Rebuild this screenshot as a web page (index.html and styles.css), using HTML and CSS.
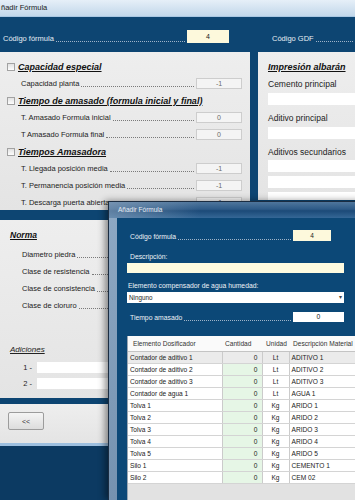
FILE: index.html
```html
<!DOCTYPE html>
<html lang="es">
<head>
<meta charset="utf-8">
<title>Añadir Fórmula</title>
<link rel="stylesheet" href="styles.css">
</head>
<body>

<div class="screen">

  <div class="back-win">
    <div class="win-title">ñadir Fórmula</div>
    <div class="win-body">

      <div class="band">
        <div class="pair first">
          <span class="lbl">Código fórmula</span><span class="dots"></span><span class="ycode">4</span>
        </div>
        <div class="pair second">
          <span class="lbl">Código GDF</span><span class="dots"></span>
        </div>
      </div>

      <div class="cols">
        <div class="panel tiempos">
          <div class="group"><span class="check"></span><span class="heading">Capacidad especial</span></div>
          <div class="row"><span class="lbl">Capacidad planta</span><span class="dots"></span><span class="field">-1</span></div>
          <div class="group"><span class="check"></span><span class="heading">Tiempo de amasado (formula inicial y final)</span></div>
          <div class="row"><span class="lbl">T. Amasado Formula inicial</span><span class="dots"></span><span class="field">0</span></div>
          <div class="row"><span class="lbl">T Amasado Formula final</span><span class="dots"></span><span class="field">0</span></div>
          <div class="group"><span class="check"></span><span class="heading">Tiempos Amasadora</span></div>
          <div class="row"><span class="lbl">T. Llegada posición media</span><span class="dots"></span><span class="field">-1</span></div>
          <div class="row"><span class="lbl">T. Permanencia posición media</span><span class="dots"></span><span class="field">-1</span></div>
          <div class="row"><span class="lbl">T. Descarga puerta abierta</span><span class="dots"></span><span class="field">-1</span></div>
        </div>

        <div class="panel albaran">
          <div class="heading">Impresión albarán</div>
          <div class="cap">Cemento principal</div>
          <div class="blank"></div>
          <div class="cap gap">Aditivo principal</div>
          <div class="blank"></div>
          <div class="cap gap">Aditivos secundarios</div>
          <div class="blank flush"></div>
          <div class="blank"></div>
          <div class="blank"></div>
        </div>
      </div>

      <div class="panel norma">
        <div class="heading small">Norma</div>
        <div class="nrows">
          <div class="nrow"><span class="lbl">Diametro piedra</span><span class="dots"></span></div>
          <div class="nrow"><span class="lbl">Clase de resistencia</span><span class="dots"></span></div>
          <div class="nrow"><span class="lbl">Clase de consistencia</span><span class="dots"></span></div>
          <div class="nrow"><span class="lbl">Clase de cloruro</span><span class="dots"></span></div>
        </div>
        <div class="adic">Adiciones</div>
        <div class="arow"><span class="num">1 -</span><span class="abox"></span></div>
        <div class="arow"><span class="num">2 -</span><span class="abox"></span></div>
      </div>

      <div class="panel foot">
        <button class="btn">&lt;&lt;</button>
      </div>

    </div>
  </div>

  <div class="front-win">
    <div class="front-title">Añadir Fórmula</div>
    <div class="front-body">

      <div class="frow fcode">
        <span class="lbl">Código fórmula</span><span class="dots"></span><span class="ycode small">4</span>
      </div>

      <div class="flabel">Descripción:</div>
      <div class="ybox"></div>

      <div class="flabel tight">Elemento compensador de agua humedad:</div>
      <div class="combo"><span>Ninguno</span><span class="arrow">&#9662;</span></div>

      <div class="frow ftime">
        <span class="lbl">Tiempo amasado</span><span class="dots"></span><span class="wfield">0</span>
      </div>

      <div class="grid-wrap">
        <table class="grid">
          <colgroup>
            <col class="c1"><col class="c2"><col class="c3"><col class="c4">
          </colgroup>
          <thead>
            <tr><th class="h1">Elemento Dosificador</th><th class="h2">Cantidad</th><th class="h3">Unidad</th><th class="h4">Descripción Material</th></tr>
          </thead>
          <tbody>
            <tr class="sel"><td>Contador de aditivo 1</td><td class="qty">0</td><td class="unit">Lt</td><td>ADITIVO 1</td></tr>
            <tr><td>Contador de aditivo 2</td><td class="qty">0</td><td class="unit">Lt</td><td>ADITIVO 2</td></tr>
            <tr><td>Contador de aditivo 3</td><td class="qty">0</td><td class="unit">Lt</td><td>ADITIVO 3</td></tr>
            <tr><td>Contador de agua 1</td><td class="qty">0</td><td class="unit">Lt</td><td>AGUA 1</td></tr>
            <tr><td>Tolva 1</td><td class="qty">0</td><td class="unit">Kg</td><td>ARIDO 1</td></tr>
            <tr><td>Tolva 2</td><td class="qty">0</td><td class="unit">Kg</td><td>ARIDO 2</td></tr>
            <tr><td>Tolva 3</td><td class="qty">0</td><td class="unit">Kg</td><td>ARIDO 3</td></tr>
            <tr><td>Tolva 4</td><td class="qty">0</td><td class="unit">Kg</td><td>ARIDO 4</td></tr>
            <tr><td>Tolva 5</td><td class="qty">0</td><td class="unit">Kg</td><td>ARIDO 5</td></tr>
            <tr><td>Silo 1</td><td class="qty">0</td><td class="unit">Kg</td><td>CEMENTO 1</td></tr>
            <tr><td>Silo 2</td><td class="qty">0</td><td class="unit">Kg</td><td>CEM 02</td></tr>
          </tbody>
        </table>
      </div>

    </div>
  </div>

</div>

</body>
</html>
```

FILE: styles.css
```css
body {
  margin: 0;
  padding: 0;
  background-color: #0c3a62;
  font-family: "Liberation Sans", Arial, sans-serif;
  font-size: 7.5px;
}

.screen {
  position: relative;
  width: 355px;
  height: 500px;
  overflow: hidden;
}

/* ---------- back window ---------- */

.back-win {
  width: 355px;
}

.win-title {
  height: 16px;
  line-height: 16px;
  padding-left: 1px;
  color: #1a1a1a;
  background: linear-gradient(#e6eff8, #c2d7ea);
  border-bottom: 1px solid #a9c7e2;
}

.win-body {
  background-color: #0d4572;
  border-bottom: 3px solid #9dbfdf;
}

.dots {
  flex: 1;
  height: 0;
  border-bottom: 1px dotted #7a7a7a;
  margin: 0 2px;
}

.band {
  height: 35px;
  box-sizing: border-box;
  padding: 0 0 9px 3px;
  display: flex;
  align-items: flex-end;
  color: #e6edf4;
}

.band .pair {
  display: flex;
  align-items: flex-end;
}

.band .first {
  width: 226px;
}

.band .second {
  flex: 1;
  margin-left: 43px;
}

.band .lbl {
  line-height: 9px;
}

.band .dots {
  border-bottom-color: #9fb3c8;
  margin-bottom: 1px;
}

.ycode {
  width: 42px;
  height: 13px;
  line-height: 13px;
  background-color: #fdf9dc;
  color: #222;
  text-align: center;
  font-size: 7px;
}

.cols {
  display: flex;
  align-items: flex-start;
  gap: 8px;
  height: 158px;
}

.panel {
  background: linear-gradient(#eeeeee, #e4e4e4);
  color: #222;
  box-sizing: border-box;
  overflow: hidden;
}

.tiempos {
  width: 250px;
  height: 158px;
  padding: 6px 8px 0 0;
}

.group {
  display: flex;
  align-items: center;
  height: 17px;
  padding-left: 7px;
}

.check {
  width: 6px;
  height: 6px;
  border: 1px solid #a2a2a2;
  background: linear-gradient(#e2e2e2, #fdfdfd);
  margin-right: 3px;
}

.heading {
  font-size: 9px;
  font-weight: bold;
  font-style: italic;
  text-decoration: underline;
  color: #111;
}

.row {
  display: flex;
  align-items: center;
  height: 17px;
  padding-left: 21px;
}

.row .dots,
.nrow .dots {
  margin-top: 6px;
}

.field {
  width: 46px;
  height: 11px;
  box-sizing: border-box;
  border: 1px solid #cdcdcd;
  background-color: #f4f4f4;
  color: #6a6a6a;
  font-size: 7px;
  line-height: 9px;
  text-align: center;
}

.albaran {
  flex: 1;
  height: 148px;
  padding: 7px 0 0 10px;
  font-size: 8.5px;
}

.albaran .heading {
  line-height: 16px;
}

.cap {
  line-height: 16px;
  margin-top: 1px;
}

.cap.gap {
  margin-top: 5px;
}

.blank {
  height: 12px;
  background-color: #ffffff;
  margin-top: 4px;
}

.cap + .blank {
  margin-top: 1px;
}

.blank.flush {
  margin-top: 0;
}

.norma {
  margin-top: 10px;
  height: 178px;
  padding: 8px 0 0 10px;
}

.norma .heading.small {
  font-size: 8.5px;
  line-height: 14px;
}

.nrows {
  margin-top: 4px;
  width: 200px;
}

.nrow {
  display: flex;
  align-items: center;
  height: 17px;
  padding-left: 12px;
}

.adic {
  margin-top: 29px;
  line-height: 14px;
  font-size: 8px;
  font-style: italic;
  text-decoration: underline;
  color: #222;
}

.arow {
  display: flex;
  align-items: center;
  height: 11px;
  margin-top: 5px;
}

.arow .num {
  width: 22px;
  text-align: right;
}

.abox {
  width: 200px;
  height: 11px;
  margin-left: 5px;
  background-color: #ffffff;
}

.foot {
  margin-top: 6px;
  height: 39px;
  padding: 8px 0 0 8px;
}

.btn {
  width: 36px;
  height: 18px;
  padding: 0;
  font-family: "Liberation Sans", Arial, sans-serif;
  font-size: 7px;
  color: #333;
  background: linear-gradient(#f5f5f5, #dddddd);
  border: 1px solid #9c9c9c;
  border-radius: 2px;
}

/* ---------- front window ---------- */

.front-win {
  position: absolute;
  left: 108px;
  top: 201px;
  right: -60px;
  bottom: 0;
  display: flex;
  flex-direction: column;
  border-top: 1px solid #1b2d42;
  border-left: 1px solid #1b2d42;
  background: linear-gradient(#8fa9c4, #7592b0);
  box-shadow: -3px 0 7px rgba(0, 0, 0, 0.45);
}

.front-title {
  height: 16px;
  line-height: 16px;
  padding-left: 9px;
  font-size: 6.5px;
  color: #e6edf4;
  background:
    linear-gradient(90deg, rgba(150, 172, 196, 0.55) 0%, rgba(150, 172, 196, 0) 30%),
    linear-gradient(180deg, #4f769c 0%, #2d5a87 45%, #1c4a78 55%, #356796 100%);
}

.front-body {
  flex: 1;
  margin-left: 8px;
  padding-left: 10px;
  display: flex;
  flex-direction: column;
  background-color: #0c4877;
  color: #eef2f6;
  font-size: 6.8px;
}

.frow {
  display: flex;
  align-items: flex-end;
  width: 217px;
}

.frow .lbl {
  line-height: 8px;
  padding-left: 3px;
}

.frow .dots {
  border-bottom-color: #9fb3c8;
  margin-bottom: 1px;
}

.fcode {
  margin-top: 12px;
  height: 11px;
}

.ycode.small {
  width: 38px;
  height: 11px;
  line-height: 11px;
  margin-right: 13px;
  font-size: 6.5px;
}

.flabel {
  margin-top: 12px;
  line-height: 8px;
  padding-left: 3px;
}

.flabel.tight {
  margin-top: 9px;
  padding-left: 1px;
}

.ybox {
  width: 217px;
  height: 10px;
  margin-top: 2px;
  background-color: #fefbe0;
}

.combo {
  width: 217px;
  height: 11px;
  margin-top: 2px;
  box-sizing: border-box;
  padding: 0 2px;
  display: flex;
  justify-content: space-between;
  line-height: 11px;
  background-color: #ffffff;
  color: #222;
  font-size: 6.3px;
}

.combo .arrow {
  font-size: 6px;
  color: #444;
}

.ftime {
  margin-top: 9px;
  height: 10px;
}

.wfield {
  width: 51px;
  height: 10px;
  line-height: 10px;
  text-align: center;
  background-color: #ffffff;
  color: #222;
}

.grid-wrap {
  flex: 1;
  margin-top: 14px;
  background-color: #e2e2e2;
  border-left: 1px solid #9aa6b2;
}

.grid {
  border-collapse: collapse;
  table-layout: fixed;
  width: 260px;
  color: #222;
  font-size: 6.6px;
}

.grid col.c1 { width: 94px; }
.grid col.c2 { width: 40px; }
.grid col.c3 { width: 27px; }
.grid col.c4 { width: 99px; }

.grid th {
  height: 15px;
  padding: 0;
  font-weight: normal;
  text-align: left;
  color: #333;
  background-color: #fafafa;
  border-bottom: 1px solid #c4c4c4;
  white-space: nowrap;
}

.grid th.h1 { padding-left: 5px; }
.grid th.h2 { padding-left: 3px; }
.grid th.h3 { padding-left: 4px; }
.grid th.h4 { padding-left: 4px; }

.grid td {
  height: 11px;
  padding: 0 0 0 2px;
  line-height: 11px;
  background-color: #ffffff;
  border-bottom: 1px solid #d4d4d4;
  border-right: 1px solid #cbcbcb;
  white-space: nowrap;
  overflow: hidden;
}

.grid td.qty {
  text-align: right;
  padding: 0 4px 0 0;
  background-color: #e6f6e6;
}

.grid td.unit {
  text-align: center;
  padding: 0;
}

.grid tr.sel td {
  background-color: #ebebeb;
}
```
